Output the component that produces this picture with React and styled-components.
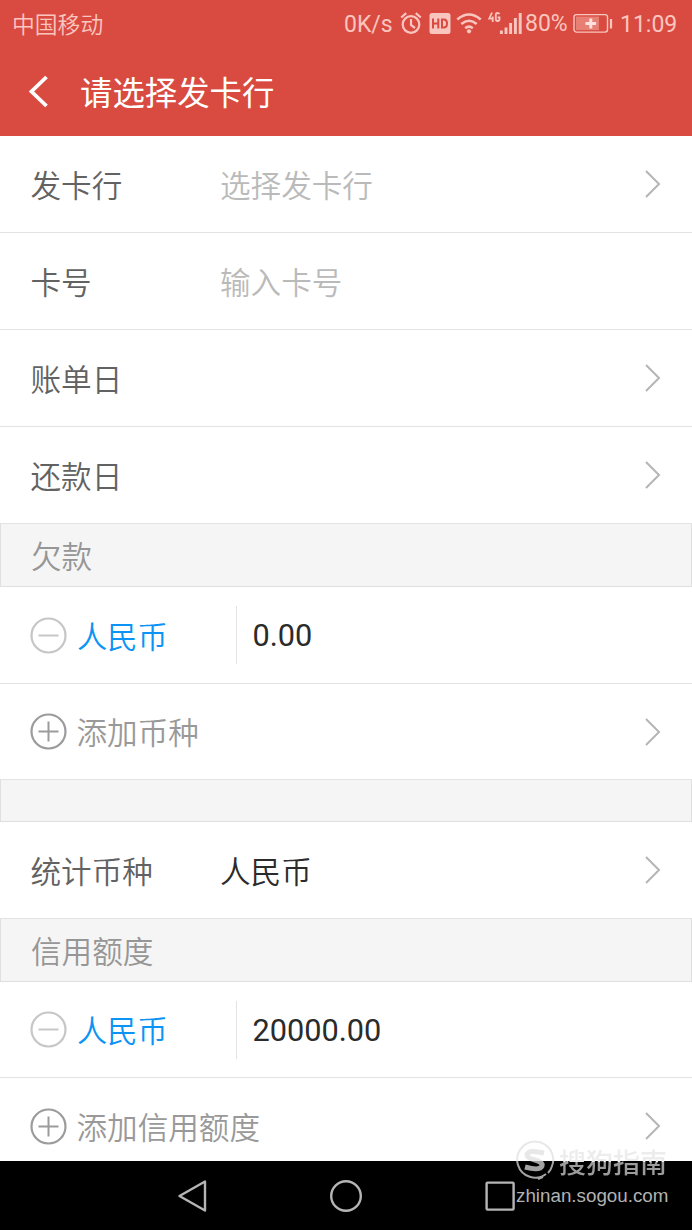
import React from "react";
import styled, { createGlobalStyle } from "styled-components";

const Global = createGlobalStyle`
  * { box-sizing: border-box; }
  body { margin: 0; background: #fff; font-family: Roboto, "Noto Sans CJK SC", sans-serif; }
`;
const Screen = styled.div`
  position: relative; width: 692px; height: 1230px; overflow: hidden;
  display: flex; flex-direction: column; background: #fff;
`;
const Header = styled.header`
  height: 136px; flex: none; background: #d94b41; display: flex; flex-direction: column;
`;
const StatusBar = styled.div`
  height: 48px; padding: 0 15px 0 12px; display: flex; align-items: center;
  color: #f9c6bf; font-size: 23px; line-height: 48px; white-space: nowrap;
`;
const Carrier = styled.span`
  font-size: 22.8px; font-weight: 350; margin-right: auto; padding-top: 4px;
`;
const StatusText = styled.span`
  width: ${(p) => p.$w}px; margin-left: ${(p) => p.$ml || 0}px;
  padding-top: ${(p) => p.$down || 0}px;
`;
const StatusIcon = styled.svg`
  flex: none; display: block; width: ${(p) => p.$w}px; height: 28px; margin-left: ${(p) => p.$ml || 0}px;
`;
const TitleBar = styled.div`
  height: 88px; display: flex; align-items: center; padding-left: 28px;
`;
const Title = styled.h1`
  margin: 0 0 0 32px; padding-top: 4px; font-size: 32.4px; line-height: 48px; font-weight: 400; color: #fff;
`;
const List = styled.main`
  flex: 1; min-height: 0; overflow: hidden; display: flex; flex-direction: column;
`;
const Row = styled.div`
  flex: none; height: ${(p) => p.$h || 97}px; border-bottom: 1px solid #e3e3e3;
  display: flex; align-items: center; padding: 0 31px 0 30px;
  font-size: 30.6px; line-height: 46px; white-space: nowrap;
`;
const Label = styled.span`
  width: 190px; padding: 6px 0 0 0.5px; color: #626262; font-weight: 350;
`;
const Value = styled.span`
  padding-top: 6px; color: ${(p) => (p.$hint ? "#bababa" : "#2b2b2b")}; font-weight: 350;
`;
const Section = styled.div`
  flex: none; height: ${(p) => p.$h}px; background: #f5f5f5; border: 1px solid #dfdfdf; border-top-width: 0;
  padding: 6px 0 0 30px; display: flex; align-items: center;
  color: #969696; font-size: 30.6px; line-height: 46px; font-weight: 350;
`;
const Currency = styled.span`
  margin-left: 10px; padding-top: 5px; width: 159px; color: #0b93f5; font-size: 30.2px; font-weight: 350;
`;
const AddText = styled.span`
  margin-left: 9.5px; padding-top: 5px; color: #999; font-weight: 350;
`;
const Amount = styled.span`
  height: 58px; border-left: 1px solid #e3e3e3; padding-left: 15.5px; line-height: 60px;
  color: #2b2b2b; font-size: 30.7px;
`;
const ChevronSvg = styled.svg`
  margin-left: auto; display: block;
`;
const Circle = styled.svg`
  flex: none; display: block; color: ${(p) => p.$c};
`;
const NavBar = styled.nav`
  flex: none; height: 69px; background: #000; display: flex; align-items: center; padding-left: 176px;
`;
const NavIcon = styled.svg`
  display: block; margin-right: 122px; flex: none;
`;
const Watermark = styled.div`
  position: absolute; left: 515px; top: 1140px; width: 160px; color: #b4b4b4;
`;
const Brand = styled.div`
  display: flex; align-items: center; height: 42px;
`;
const BrandName = styled.span`
  margin-left: 4px; padding-top: 5px; font-size: 27px; line-height: 42px; font-weight: 500; white-space: nowrap;
  background: linear-gradient(#ececec 0 23.5px, #9c9c9c 23.5px);
  -webkit-background-clip: text; background-clip: text; color: transparent;
`;
const Site = styled.div`
  font-family: "Liberation Sans", sans-serif; font-size: 18.8px; line-height: 24px; margin: 2px 0 0 1px; color: #b2b2b2;
`;

const Chevron = () => (
  <ChevronSvg width="18" height="30" viewBox="0 0 18 30">
    <path d="M3 2l13 13L3 28" fill="none" stroke="#b5b5b5" strokeWidth="2" />
  </ChevronSvg>
);
const Sign = ({ plus }) => (
  <Circle $c={plus ? "#9b9b9b" : "#c6c6c6"} width="37" height="37" viewBox="0 0 37 37">
    <circle cx="18.5" cy="18.5" r="17" fill="none" stroke="currentColor" strokeWidth="2.2" />
    <path d={plus ? "M8.5 18.5h20M18.5 8.5v20" : "M8.5 18.5h20"} stroke="currentColor" strokeWidth="2" />
  </Circle>
);
const Field = ({ label, value, hint, arrow, h }) => (
  <Row $h={h}>
    <Label>{label}</Label>
    <Value $hint={hint}>{value}</Value>
    {arrow && <Chevron />}
  </Row>
);
const Money = ({ amount, h }) => (
  <Row $h={h}>
    <Sign />
    <Currency>人民币</Currency>
    <Amount>{amount}</Amount>
  </Row>
);
const Add = ({ children, h }) => (
  <Row $h={h}>
    <Sign plus />
    <AddText>{children}</AddText>
    <Chevron />
  </Row>
);

const tint = "#f9c6bf";
const StatusIcons = () => (
  <>
    <StatusIcon $w={22} $ml={7} viewBox="0 0 22 28" fill="none" stroke={tint} strokeWidth="2.2">
      <circle cx="11" cy="14.5" r="8.3" />
      <path d="M11 9v6l4 3M1.2 7.5l5-4.3M20.8 7.5l-5-4.3" />
    </StatusIcon>
    <StatusIcon $w={22} $ml={7} viewBox="0 0 22 28">
      <rect x="0.5" y="3" width="21" height="21" rx="2.5" fill={tint} />
      <path d="M4 8.5v10M9.3 8.5v10M4 13.5h5.3M13 9.5v8h1.8q3.2 0 3.2-4t-3.2-4z" fill="none" stroke="#d94b41" strokeWidth="2" />
    </StatusIcon>
    <StatusIcon $w={26} $ml={5} viewBox="0 0 26 28" fill="none" stroke={tint} strokeWidth="2.6">
      <path d="M1.3 9.5q11.7-10 23.4 0M5.3 14q7.7-6.5 15.4 0M9.2 18.2q3.8-3 7.6 0" />
      <circle cx="13" cy="21.3" r="2.1" fill={tint} stroke="none" />
    </StatusIcon>
    <StatusIcon $w={35} $ml={6} viewBox="0 0 35 28" fill="none" stroke={tint}>
      <path d="M4 2.5L1.2 8.7h4.5M4.7 6.5V12M11.4 4.2q-.6-1.2-1.8-1.2-1.8 0-1.8 2v4q0 2 1.8 2 1.9 0 1.9-2V7.3H9.6" strokeWidth="1.8" />
      <path d="M13.4 20.5V24M18 17.5V24M22.6 13V24M27.4 8V24M32.2 3V24" strokeWidth="2.9" />
    </StatusIcon>
  </>
);

export default function App() {
  return (
    <Screen>
      <Global />
      <Header>
        <StatusBar>
          <Carrier>中国移动</Carrier>
          <StatusText $w={49} $down={2}>0K/s</StatusText>
          <StatusIcons />
          <StatusText $w={43} $ml={2}>80%</StatusText>
          <StatusIcon $w={40} $ml={5} viewBox="0 0 40 28">
            <rect x="1" y="4.6" width="33.5" height="17.5" rx="2.5" fill="none" stroke={tint} strokeWidth="1.4" />
            <rect x="3" y="6.6" width="23" height="13.5" fill="#e77f75" />
            <path d="M17.8 8.5v10M12.5 13.5h10.6" stroke="#ffe2de" strokeWidth="3" />
            <path d="M38 9v9.5" stroke={tint} strokeWidth="2.2" />
          </StatusIcon>
          <StatusText $w={57} $ml={7} $down={2}>11:09</StatusText>
        </StatusBar>
        <TitleBar>
          <svg width="20" height="34" viewBox="0 0 20 34">
            <path d="M18.5 2L3.5 16.5 18.5 31" fill="none" stroke="#fff" strokeWidth="3.8" />
          </svg>
          <Title>请选择发卡行</Title>
        </TitleBar>
      </Header>
      <List>
        <Field label="发卡行" value="选择发卡行" hint arrow />
        <Field label="卡号" value="输入卡号" hint />
        <Field label="账单日" arrow />
        <Field label="还款日" arrow h={96.5} />
        <Section $h={63.5}>欠款</Section>
        <Money amount="0.00" />
        <Add h={96}>添加币种</Add>
        <Section $h={42} />
        <Field label="统计币种" value="人民币" arrow h={97} />
        <Section $h={63}>信用额度</Section>
        <Money amount="20000.00" h={96} />
        <Add>添加信用额度</Add>
      </List>
      <NavBar>
        <NavIcon width="32" height="36" viewBox="0 0 32 36">
          <path d="M29 3.5v29L3.5 18z" fill="none" stroke="#b5b5b5" strokeWidth="2.4" strokeLinejoin="round" />
        </NavIcon>
        <NavIcon width="32" height="36" viewBox="0 0 32 36">
          <circle cx="16" cy="18" r="14.8" fill="none" stroke="#b5b5b5" strokeWidth="2.4" />
        </NavIcon>
        <NavIcon width="32" height="36" viewBox="0 0 32 36">
          <rect x="2.6" y="4.6" width="27" height="27" rx="1" fill="none" stroke="#b5b5b5" strokeWidth="2.4" />
        </NavIcon>
      </NavBar>
      <Watermark>
        <Brand>
          <svg width="40" height="42" viewBox="0 0 40 42">
            <defs>
              <linearGradient id="fade" x1="0" y1="0" x2="0" y2="42" gradientUnits="userSpaceOnUse">
                <stop offset=".5" stopColor="#e8e8e8" />
                <stop offset=".5" stopColor="#a3a3a3" />
              </linearGradient>
            </defs>
            <path d="M31 34A18 18 0 1 1 37 26q-1 4-4 7M28 37l-5 2" fill="none" stroke="url(#fade)" strokeWidth="2" />
            <path d="M29 13q-16-4-17 2 0 3 8 5 8 2 7 6-2 5-17 1" fill="none" stroke="url(#fade)" strokeWidth="5" />
          </svg>
          <BrandName>搜狗指南</BrandName>
        </Brand>
        <Site>zhinan.sogou.com</Site>
      </Watermark>
    </Screen>
  );
}
